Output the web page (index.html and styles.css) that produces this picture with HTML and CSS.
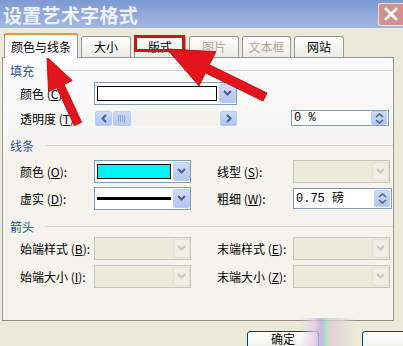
FILE: index.html
```html
<!DOCTYPE html>
<html lang="zh-CN">
<head>
  <meta charset="UTF-8" />
  <title>设置艺术字格式</title>
  <link rel="stylesheet" href="styles.css">
</head>
<body>

<!-- Title bar -->
<div class="titlebar">
  <span class="title">设置艺术字格式</span>
  <span class="close-btn">
    <svg width="14" height="14" viewBox="0 0 14 14"><path d="M2 2 L12 12 M12 2 L2 12" stroke="#fff" stroke-width="2.6" stroke-linecap="square"/></svg>
  </span>
</div>

<!-- Tabs -->
<div class="tabs">
  <div class="tab active">颜色与线条</div>
  <div class="tab">大小</div>
  <div class="tab wider">版式</div>
  <div class="tab disabled">图片</div>
  <div class="tab disabled narrow">文本框</div>
  <div class="tab">网站</div>
</div>

<div class="panel">
  <!-- 填充 -->
  <div class="section sec-fill">
    <div class="sec-head"><span>填充</span><i class="rule"></i></div>
    <div class="rows">
      <div class="row">
        <span class="lbl">颜色 (<u>C</u>):</span>
        <div class="combo long">
          <span class="swatch"></span>
          <span class="drop"><svg width="9" height="6" viewBox="0 0 9 6"><polyline points="1,1 4.5,4.5 8,1" fill="none" stroke="#4d6185" stroke-width="2"/></svg></span>
        </div>
      </div>
      <div class="row">
        <span class="lbl">透明度 (<u>T</u>):</span>
        <div class="scroll">
          <span class="sbtn"><svg width="6" height="9" viewBox="0 0 6 9"><polyline points="5,1 1.5,4.5 5,8" fill="none" stroke="#4d6185" stroke-width="2"/></svg></span>
          <span class="thumb"><i class="grip"></i></span>
          <span class="track"></span>
          <span class="sbtn"><svg width="6" height="9" viewBox="0 0 6 9"><polyline points="1,1 4.5,4.5 1,8" fill="none" stroke="#4d6185" stroke-width="2"/></svg></span>
        </div>
        <div class="spin small">
          <span class="spin-val">0 %</span>
          <span class="spin-btn">
            <svg width="9" height="5" viewBox="0 0 9 5"><polyline points="1,4 4.5,1 8,4" fill="none" stroke="#4d6185" stroke-width="1.6"/></svg>
            <svg width="9" height="5" viewBox="0 0 9 5"><polyline points="1,1 4.5,4 8,1" fill="none" stroke="#4d6185" stroke-width="1.6"/></svg>
          </span>
        </div>
      </div>
    </div>
  </div>

  <!-- 线条 -->
  <div class="section sec-line">
    <div class="sec-head"><span>线条</span><i class="rule"></i></div>
    <div class="rows">
      <div class="row">
        <span class="lbl">颜色 (<u>O</u>):</span>
        <div class="combo">
          <span class="swatch cyan"></span>
          <span class="drop"><svg width="9" height="6" viewBox="0 0 9 6"><polyline points="1,1 4.5,4.5 8,1" fill="none" stroke="#4d6185" stroke-width="2"/></svg></span>
        </div>
        <span class="lbl right">线型 (<u>S</u>):</span>
        <div class="combo off">
          <span class="swatch none"></span>
          <span class="drop"><svg width="9" height="6" viewBox="0 0 9 6"><polyline points="1,1 4.5,4.5 8,1" fill="none" stroke="#c9c7bd" stroke-width="2"/></svg></span>
        </div>
      </div>
      <div class="row">
        <span class="lbl">虚实 (<u>D</u>):</span>
        <div class="combo">
          <span class="swatch none line"><i></i></span>
          <span class="drop"><svg width="9" height="6" viewBox="0 0 9 6"><polyline points="1,1 4.5,4.5 8,1" fill="none" stroke="#4d6185" stroke-width="2"/></svg></span>
        </div>
        <span class="lbl right">粗细 (<u>W</u>):</span>
        <div class="spin">
          <span class="spin-val">0.75 磅</span>
          <span class="spin-btn">
            <svg width="9" height="5" viewBox="0 0 9 5"><polyline points="1,4 4.5,1 8,4" fill="none" stroke="#4d6185" stroke-width="1.6"/></svg>
            <svg width="9" height="5" viewBox="0 0 9 5"><polyline points="1,1 4.5,4 8,1" fill="none" stroke="#4d6185" stroke-width="1.6"/></svg>
          </span>
        </div>
      </div>
    </div>
  </div>

  <!-- 箭头 -->
  <div class="section sec-arrow">
    <div class="sec-head"><span>箭头</span><i class="rule"></i></div>
    <div class="rows">
      <div class="row">
        <span class="lbl">始端样式 (<u>B</u>):</span>
        <div class="combo off">
          <span class="swatch none"></span>
          <span class="drop"><svg width="9" height="6" viewBox="0 0 9 6"><polyline points="1,1 4.5,4.5 8,1" fill="none" stroke="#c9c7bd" stroke-width="2"/></svg></span>
        </div>
        <span class="lbl right">末端样式 (<u>E</u>):</span>
        <div class="combo off">
          <span class="swatch none"></span>
          <span class="drop"><svg width="9" height="6" viewBox="0 0 9 6"><polyline points="1,1 4.5,4.5 8,1" fill="none" stroke="#c9c7bd" stroke-width="2"/></svg></span>
        </div>
      </div>
      <div class="row">
        <span class="lbl">始端大小 (<u>I</u>):</span>
        <div class="combo off">
          <span class="swatch none"></span>
          <span class="drop"><svg width="9" height="6" viewBox="0 0 9 6"><polyline points="1,1 4.5,4.5 8,1" fill="none" stroke="#c9c7bd" stroke-width="2"/></svg></span>
        </div>
        <span class="lbl right">末端大小 (<u>Z</u>):</span>
        <div class="combo off">
          <span class="swatch none"></span>
          <span class="drop"><svg width="9" height="6" viewBox="0 0 9 6"><polyline points="1,1 4.5,4.5 8,1" fill="none" stroke="#c9c7bd" stroke-width="2"/></svg></span>
        </div>
      </div>
    </div>
  </div>
</div>

<!-- Buttons -->
<div class="footer">
  <button class="btn">确定</button>
  <button class="btn"></button>
</div>

<!-- Annotations -->
<div class="smear"></div>
<div class="mark mark-1"></div>
<div class="mark mark-2"></div>
<svg class="arrows" width="403" height="346" viewBox="0 0 403 346">
  <polygon points="47,57 48.6,91.6 56.8,87.8 74.4,125.7 81.6,122.3 64,84.4 72.2,80.6" fill="#e3141b" stroke="#c50f16" stroke-width="1" stroke-linejoin="round"/>
  <polygon points="167,49 199,85.9 205.4,72.8 263,101 267,93 209.4,64.8 215.8,51.7" fill="#e3141b" stroke="#c50f16" stroke-width="1" stroke-linejoin="round"/>
</svg>

</body>
</html>
```

FILE: styles.css
```css
* {
  margin: 0;
  padding: 0;
  box-sizing: border-box;
}

body {
  width: 403px;
  height: 346px;
  overflow: hidden;
  position: relative;
  background: #ece9d8;
  font-family: "Noto Sans CJK SC", "Liberation Sans", sans-serif;
  font-size: 12px;
  color: #000;
}

u {
  text-decoration: underline;
}

/* title bar */
.titlebar {
  height: 28px;
  display: flex;
  align-items: center;
  justify-content: space-between;
  padding-left: 3px;
  background: linear-gradient(#7d99d4, #a3b7e2);
}

.title {
  color: #eef2fb;
  font-size: 19px;
  font-weight: bold;
  letter-spacing: 0.3px;
  line-height: 1;
}

.close-btn {
  width: 25px;
  height: 23px;
  display: flex;
  align-items: center;
  justify-content: center;
  background: #d3908f;
  border: 1px solid #f2dcdc;
  border-right: none;
  border-radius: 3px 0 0 3px;
}

/* tabs */
.tabs {
  height: 29px;
  display: flex;
  align-items: flex-end;
  gap: 3px;
  padding-left: 4px;
}

.tab {
  width: 50px;
  height: 21px;
  line-height: 20px;
  text-align: center;
  border: 1px solid #919b9c;
  border-bottom: none;
  border-radius: 3px 3px 0 0;
  background: linear-gradient(#ffffff, #ecebe5);
}

.tab.active {
  width: 74px;
  height: 25px;
  line-height: 23px;
  margin-bottom: -1px;
  position: relative;
  z-index: 1;
  background: #fcfcfe;
  border-top: 2px solid #e69a2c;
}

.tab.wider {
  width: 52px;
}

.tab.narrow {
  width: 49px;
}

.tab.disabled {
  color: #aca899;
}

/* panel */
.panel {
  margin-left: 2px;
  width: 392px;
  height: 264px;
  padding-top: 4px;
  border: 1px solid #919b9c;
  border-bottom-color: #8a8a85;
  background: linear-gradient(#fcfcfe, #f4f3ee 40%);
}

.sec-head {
  height: 16px;
  display: flex;
  align-items: center;
  padding-left: 7px;
  color: #1f5490;
}

.rule {
  flex: 1;
  height: 1px;
  margin-left: 11px;
  background: #d7d4c8;
}

.rows {
  display: flex;
  flex-direction: column;
}

.sec-fill .rows {
  margin-top: 3px;
  gap: 1px;
}

.sec-line {
  margin-top: 7px;
}

.sec-line .rows {
  margin-top: 6px;
  gap: 3px;
}

.sec-arrow {
  margin-top: 8px;
}

.sec-arrow .rows {
  margin-top: 2px;
  gap: 4px;
}

.row {
  height: 24px;
  display: flex;
  align-items: center;
  padding-left: 17px;
}

.lbl {
  width: 74px;
  white-space: nowrap;
}

.lbl.right {
  width: 76px;
  margin-left: 26px;
}

/* combo box */
.combo {
  width: 97px;
  height: 23px;
  display: flex;
  padding: 1px 0 1px 2px;
  border: 1px solid #7f9db9;
  background: #fff;
}

.combo.long {
  width: 143px;
}

.swatch {
  flex: 1;
  margin: 2px 2px 2px 0;
  border: 1px solid #000;
  background: #fff;
}

.swatch.cyan {
  background: #00f4f4;
}

.swatch.none {
  border: none;
  background: transparent;
}

.swatch.line {
  display: flex;
  align-items: center;
}

.swatch.line i {
  flex: 1;
  height: 3px;
  background: #000;
}

.drop {
  width: 17px;
  display: flex;
  align-items: center;
  justify-content: center;
  border: 1px solid #bccdf5;
  border-radius: 2px;
  background: linear-gradient(#cedcfc, #b0c5f3);
}

.combo.off {
  border-color: #c9c7ba;
  background: #ebeadb;
}

.combo.off .drop {
  border-color: #e2e0d6;
  background: #efeee6;
}

/* scroll bar */
.scroll {
  width: 142px;
  height: 15px;
  margin-left: 1px;
  display: flex;
  background: #f3f2ed;
}

.sbtn {
  width: 17px;
  display: flex;
  align-items: center;
  justify-content: center;
  border: 1px solid #bccdf5;
  border-radius: 2px;
  background: linear-gradient(#cedcfc, #b0c5f3);
}

.thumb {
  width: 18px;
  margin-left: 1px;
  display: flex;
  align-items: center;
  justify-content: center;
  border: 1px solid #bccdf5;
  border-radius: 2px;
  background: linear-gradient(#cedcfc, #b6caf5);
}

.grip {
  width: 8px;
  height: 7px;
  background: repeating-linear-gradient(90deg, #8ea6da 0 1px, transparent 1px 2px);
}

.track {
  flex: 1;
}

/* spin box */
.spin {
  width: 99px;
  height: 21px;
  display: flex;
  padding: 1px 1px 1px 0;
  border: 1px solid #7f9db9;
  background: #fff;
}

.spin.small {
  width: 98px;
  height: 16px;
  margin-left: 54px;
  padding: 0 1px 0 0;
}

.spin-val {
  flex: 1;
  padding-left: 2px;
  font-family: "Liberation Mono", "Noto Sans CJK SC", monospace;
  font-size: 12px;
  line-height: 18px;
}

.spin.small .spin-val {
  line-height: 14px;
}

.spin-btn {
  width: 16px;
  display: flex;
  flex-direction: column;
  align-items: center;
  justify-content: center;
  gap: 1px;
  border: 1px solid #bccdf5;
  border-radius: 2px;
  background: linear-gradient(#cedcfc, #b0c5f3);
}

/* footer buttons, cut off by the bottom edge */
.footer {
  display: flex;
  gap: 43px;
  padding: 10px 0 0 247px;
}

.btn {
  flex: none;
  width: 72px;
  height: 23px;
  padding-top: 0;
  border: 1px solid #003c74;
  border-radius: 3px;
  background: linear-gradient(#ffffff, #f0f0ea 80%, #d6d0c5);
  font-family: "Noto Sans CJK SC", sans-serif;
  font-size: 12px;
  line-height: 13px;
  display: flex;
  align-items: flex-start;
  justify-content: center;
}

/* annotations over the screenshot */
.smear {
  position: absolute;
  left: 300px;
  top: 318px;
  width: 56px;
  height: 28px;
  background: linear-gradient(90deg, rgba(236, 233, 216, 0), #e6cbe6 25%, #b8a9e2 38%, #a9e3c9 48%, #e9c7d0 58%, #e2d8dc 75%, rgba(236, 233, 216, 0));
  opacity: 0.8;
}

.mark {
  position: absolute;
  border: 3px solid #c4161c;
}

.mark-1 {
  left: 4px;
  top: 34px;
  width: 74px;
  height: 24px;
}

.mark-2 {
  left: 134px;
  top: 35px;
  width: 51px;
  height: 17px;
}

.arrows {
  position: absolute;
  left: 0;
  top: 0;
  pointer-events: none;
}
```
